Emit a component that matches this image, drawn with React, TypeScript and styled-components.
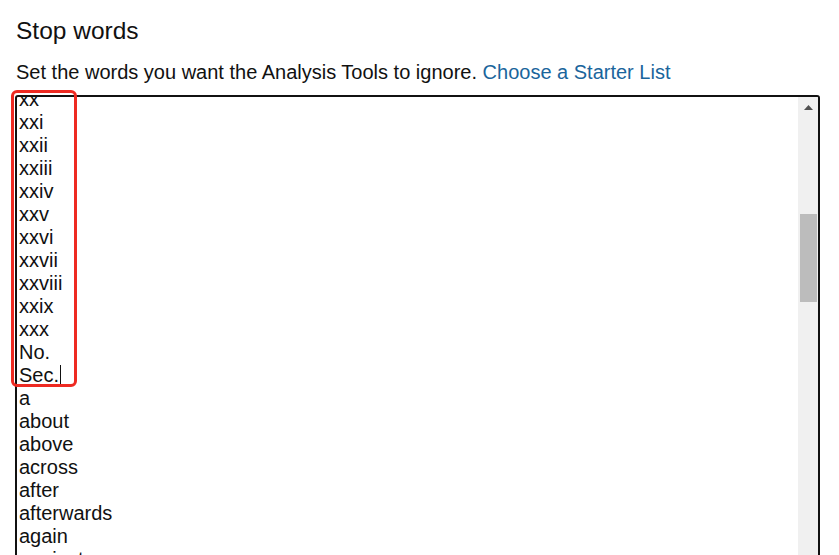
import styled, { createGlobalStyle } from "styled-components"

const GlobalStyle = createGlobalStyle`
  html, body {
    margin: 0;
    overflow: hidden;
    background: #fff;
  }
  body {
    font-family: "Liberation Sans", Arial, sans-serif;
    color: #111;
  }
`;

const words = [
  "xx", "xxi", "xxii", "xxiii", "xxiv", "xxv", "xxvi", "xxvii", "xxviii",
  "xxix", "xxx", "No.", "Sec.",
  "a", "about", "above", "across", "after", "afterwards", "again", "against",
  "all", "almost", "alone", "along",
];

export default function App() {
  return (
    <>
      <GlobalStyle />
      <Page>
        <Title>Stop words</Title>
        <Intro>
          Set the words you want the Analysis Tools to ignore.{" "}
          <StarterLink href="#">Choose a Starter List</StarterLink>
        </Intro>
        <EditorWrap>
          <Editor>
            <WordList>
              {words.map((w) => (
                <Word key={w}>
                  {w}
                  {w === "Sec." && <Caret />}
                </Word>
              ))}
            </WordList>
            <ScrollTrack>
              <ArrowButton>
                <svg width="9" height="5" viewBox="0 0 9 5">
                  <path d="M4.5 0 L9 5 L0 5 Z" fill="#505050" />
                </svg>
              </ArrowButton>
              <Thumb />
            </ScrollTrack>
          </Editor>
          <Highlight />
        </EditorWrap>
      </Page>
    </>
  )
}

const Page = styled.div`
  height: 555px;
  padding: 17px 0 0 16px;
  box-sizing: border-box;
  overflow: hidden;
`;

const Title = styled.h2`
  margin: 0;
  font-size: 24.5px;
  font-weight: normal;
  line-height: 28px;
  color: #111;
`;

const Intro = styled.p`
  margin: 16px 0 0;
  font-size: 20px;
  line-height: 23px;
  color: #111;
`;

const StarterLink = styled.a`
  color: #1a659c;
  text-decoration: none;
`;

const EditorWrap = styled.div`
  position: relative;
  margin: 11px 0 0 -1px;
  width: 805px;
`;

const Editor = styled.div`
  display: flex;
  height: 480px;
  border: 2px solid #111;
  border-radius: 3px;
  overflow: hidden;
  background: #fff;
`;

const WordList = styled.div`
  flex: 1;
  padding: 2px 2px 0;
  margin-top: -11px;
  font-size: 20px;
  line-height: 23px;
  color: #111;
`;

const Word = styled.div`
  white-space: nowrap;
`;

const Caret = styled.span`
  display: inline-block;
  width: 1px;
  height: 20px;
  margin-left: 1px;
  vertical-align: -3px;
  background: #111;
`;

const ScrollTrack = styled.div`
  display: flex;
  flex-direction: column;
  width: 20px;
  background: #f0f0f0;
`;

const ArrowButton = styled.div`
  display: flex;
  justify-content: center;
  align-items: flex-start;
  height: 117px;
  padding-top: 8px;
  padding-left: 1px;
  box-sizing: border-box;
`;

const Thumb = styled.div`
  width: 17px;
  height: 88px;
  margin-left: 2px;
  background: #bcbcbc;
`;

const Highlight = styled.div`
  position: absolute;
  left: -4px;
  top: -5px;
  width: 60px;
  height: 291px;
  border: 3px solid #ee2a22;
  border-radius: 6px;
  pointer-events: none;
`;
